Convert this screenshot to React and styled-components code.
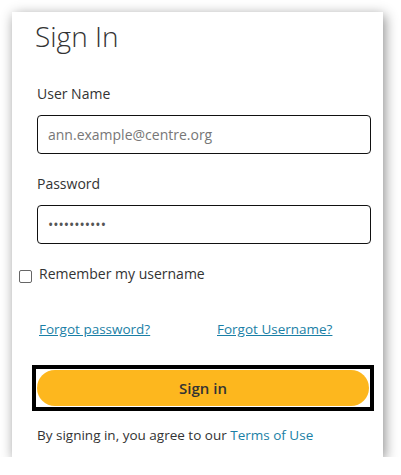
import React from 'react';
import styled, { createGlobalStyle } from 'styled-components';

const GlobalStyle = createGlobalStyle`
  body {
    margin: 0;
    background: #fff;
    font-family: 'Open Sans', 'Noto Sans', sans-serif;
    color: #333;
  }
`;

const Card = styled.form`
  box-sizing: border-box;
  width: 371px;
  height: 445px;
  margin: 12px 0 0 12px;
  padding: 7px 12px 0 25px;
  background: #fff;
  box-shadow: 2px 3px 12px rgba(0, 0, 0, 0.45);
  display: flex;
  flex-direction: column;
`;

const Title = styled.h1`
  margin: 0 0 0 -2px;
  font-size: 28px;
  line-height: 34px;
  font-weight: 300;
  color: #333;
`;

const Label = styled.label`
  display: block;
  margin-top: ${(p) => p.gap}px;
  font-size: 14px;
  line-height: 20px;
  color: #333;
`;

const Input = styled.input`
  box-sizing: border-box;
  width: 100%;
  height: 39px;
  margin-top: 11px;
  padding: 0 10px;
  border: 1px solid #111;
  border-radius: 4px;
  font-family: inherit;
  font-size: 14px;
  color: #555;
  background: #fff;
  outline: none;
  &::placeholder {
    color: #777;
  }
`;

const CheckRow = styled.label`
  display: flex;
  align-items: flex-start;
  gap: 7px;
  margin: 20px 0 0 -18px;
  font-size: 14px;
  line-height: 20px;
`;

const Check = styled.input`
  appearance: none;
  width: 13px;
  height: 13px;
  margin: 6px 0 0;
  border: 1px solid #666;
  border-radius: 2px;
  background: #fff;
`;

const Links = styled.div`
  display: grid;
  grid-template-columns: 178px auto;
  margin-top: 36px;
  padding-left: 2px;
  font-size: 13.5px;
  line-height: 18px;
`;

const Link = styled.a`
  color: #1a7fa6;
  text-decoration: ${(p) => (p.plain ? 'none' : 'underline')};
  justify-self: start;
`;

const Focus = styled.div`
  margin: 27px 0 0 -5px;
  width: 342px;
  box-sizing: border-box;
  border: 4px solid #000;
  padding: 1px;
`;

const Button = styled.button`
  display: block;
  width: 100%;
  height: 36px;
  border: none;
  border-radius: 18px;
  background: #fdb71e;
  color: #333;
  font-family: inherit;
  font-size: 15px;
  font-weight: 600;
  cursor: pointer;
`;

const Terms = styled.p`
  margin: 15px 0 0;
  font-size: 13.5px;
  line-height: 19px;
`;

export default function App() {
  return (
    <>
      <GlobalStyle />
      <Card onSubmit={(e) => e.preventDefault()}>
        <Title>Sign In</Title>
        <Label gap={31} htmlFor="user">User Name</Label>
        <Input id="user" type="text" placeholder="ann.example@centre.org" />
        <Label gap={20} htmlFor="pass">Password</Label>
        <Input id="pass" type="password" defaultValue="secret12345" />
        <CheckRow>
          <Check type="checkbox" />
          Remember my username
        </CheckRow>
        <Links>
          <Link href="#">Forgot password?</Link>
          <Link href="#">Forgot Username?</Link>
        </Links>
        <Focus>
          <Button type="submit">Sign in</Button>
        </Focus>
        <Terms>
          By signing in, you agree to our <Link plain href="#">Terms of Use</Link>
        </Terms>
      </Card>
    </>
  );
}
